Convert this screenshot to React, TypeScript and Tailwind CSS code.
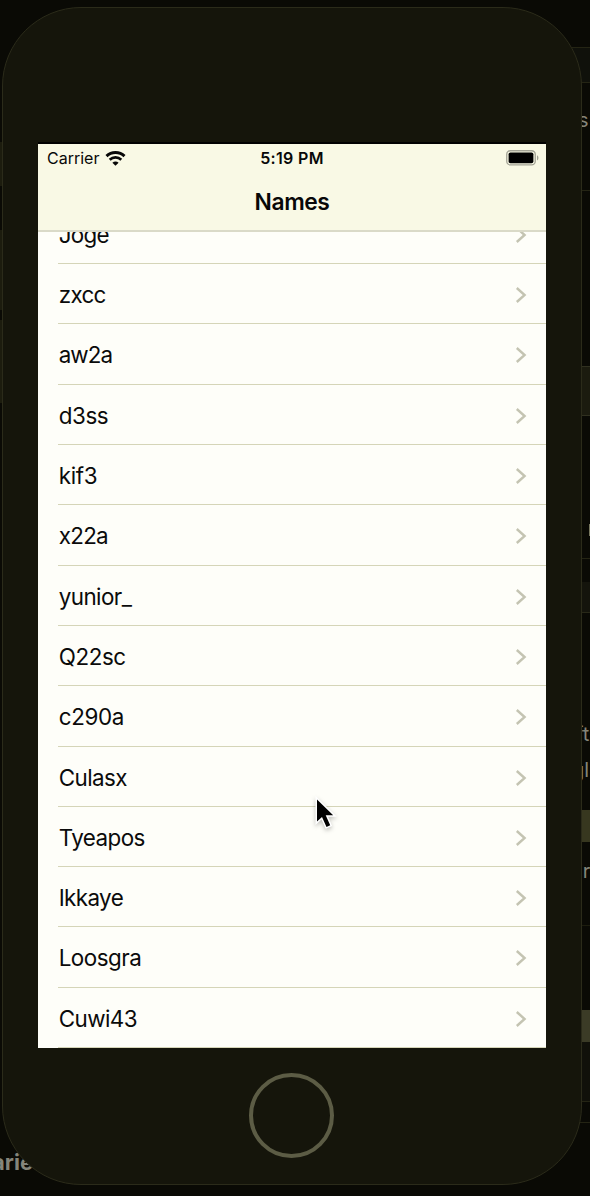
type Row = { label: string; tracking: string };

const rows: Row[] = [
  { label: 'Joge', tracking: 'tracking-[-0.7px]' },
  { label: 'zxcc', tracking: 'tracking-[-0.65px]' },
  { label: 'aw2a', tracking: 'tracking-[-0.9px]' },
  { label: 'd3ss', tracking: 'tracking-[-0.4px]' },
  { label: 'kif3', tracking: 'tracking-[-0.35px]' },
  { label: 'x22a', tracking: 'tracking-[-0.7px]' },
  { label: 'yunior_', tracking: 'tracking-[-0.55px]' },
  { label: 'Q22sc', tracking: 'tracking-[-0.4px]' },
  { label: 'c290a', tracking: 'tracking-[-0.35px]' },
  { label: 'Culasx', tracking: 'tracking-[-0.55px]' },
  { label: 'Tyeapos', tracking: 'tracking-[-0.55px]' },
  { label: 'Ikkaye', tracking: 'tracking-[-0.6px]' },
  { label: 'Loosgra', tracking: 'tracking-[-0.5px]' },
  { label: 'Cuwi43', tracking: 'tracking-[-0.55px]' },
];

function WifiIcon() {
  return (
    <svg className="ml-[6px] h-[15px] w-[21px]" viewBox="0 0 20 15" fill="none" stroke="#080808">
      <path d="M1 5.1C6 .3 14 .3 19 5.1" strokeWidth="3" />
      <path d="M4.2 8.7C7.6 5.6 12.4 5.6 15.8 8.7" strokeWidth="2.7" />
      <path d="M10 14.8 6.9 11.8C8.7 10.2 11.3 10.2 13.1 11.8Z" fill="#080808" stroke="none" />
    </svg>
  );
}

function BatteryIcon() {
  return (
    <svg className="h-[16px] w-[33px]" viewBox="0 0 33 16">
      <rect x="0.75" y="0.75" width="28.5" height="14.2" rx="3.6" fill="none" stroke="#a3a395" strokeWidth="1.3" />
      <rect x="2.6" y="2.5" width="24.8" height="10.7" rx="1.8" fill="#000" />
      <path d="M31 5.3c1.9.8 1.9 4.4 0 5.2z" fill="#a3a395" />
    </svg>
  );
}

function Chevron() {
  return (
    <svg className="mr-[19px] h-[16px] w-[12px]" viewBox="0 0 12 16" fill="none">
      <path d="M1.8 1 9.6 8 1.8 15" stroke="#c4c4b2" strokeWidth="2.4" />
    </svg>
  );
}

function LeftWindow() {
  return (
    <div className="flex w-[33px] flex-col justify-between pt-[142px] pb-[21px]">
      <div className="flex w-[4px] flex-col gap-[10px]">
        <div className="mb-[34px] h-[44px] bg-[#1c1c0e]" />
        <div className="h-[80px] bg-[#1c1c0e]" />
        <div className="h-[83px] bg-[#1c1c0e]" />
      </div>
      <div className="flex justify-end text-[22px] leading-[26px] font-bold">arie</div>
    </div>
  );
}

function RightWindow() {
  return (
    <div className="flex w-[18px] flex-col text-[20px] leading-[26px]">
      <div className="mt-[47px] h-[36px] border-y border-[#242414] bg-[#10110b]" />
      <div className="mt-[24px] h-[84px] border-b border-[#242414] pl-[6px]">s</div>
      <div className="mt-[175px] h-[50px] border-y border-[#303020] bg-[#1b1b0f]" />
      <div className="flex h-[143px] items-end justify-end border-b border-[#242414] pb-[22px]">
        <div className="h-[12px] w-px bg-[#77775f]" />
      </div>
      <div className="mt-[23px] h-[31px] border-b border-[#282818] bg-[#14140c]" />
      <div className="mt-[108px] flex h-[89px] flex-col gap-[10px] pl-[4px]">
        <span>ft</span>
        <span className="-ml-[4px]">gl</span>
      </div>
      <div className="h-[32px] bg-[#37371f]" />
      <div className="h-[84px] border-b border-[#1c1c0e] pt-[16px] pl-[6px]">ir</div>
      <div className="mt-[84px] h-[32px] bg-[#3b3b26]" />
      <div className="h-[60px] border-b border-[#242414] bg-[#11110a]" />
      <div className="h-[21px] border-b border-[#242414]" />
    </div>
  );
}

function Pointer() {
  return (
    <svg className="absolute top-[796px] left-[313px] h-[38px] w-[28px] drop-shadow-[0_2px_2px_rgba(0,0,0,0.25)]" viewBox="0 0 28 38">
      <path d="M4 3.5V25.5l5-4.6 4.5 10 3.7-1.6-4.5-10.1h7.5Z" fill="#000" stroke="#fff" strokeWidth="3" paintOrder="stroke" />
    </svg>
  );
}

export default function App() {
  return (
    <div className="relative grid h-[1196px] w-[590px] overflow-hidden bg-[#0a0a05] font-['Inter','Liberation_Sans',sans-serif]">
      <div className="col-start-1 row-start-1 flex h-[1196px] justify-between text-[#85857a]">
        <LeftWindow />
        <RightWindow />
      </div>
      <div className="relative col-start-1 row-start-1 mt-[7px] ml-[2px] flex h-[1178px] w-[580px] flex-col items-center rounded-[79px] border border-[#2b2b1a] bg-[#15150b]">
        <div className="mt-[134px] flex h-[906px] w-[508px] shrink-0 flex-col overflow-hidden border-t-2 border-[#020202] bg-[#fefef9]">
          <header className="flex h-[88px] shrink-0 flex-col border-b-2 border-[#dadac8] bg-[#f9f9e5] text-[#080808]">
            <div className="grid h-[28px] grid-cols-3 items-center">
              <div className="flex items-center pl-[9px] text-[16px] leading-[20px]">
                <span>Carrier</span>
                <WifiIcon />
              </div>
              <span className="text-center text-[16px] leading-[20px] font-semibold tracking-[0.35px]">5:19 PM</span>
              <div className="-mt-px flex justify-end pr-[7px]">
                <BatteryIcon />
              </div>
            </div>
            <h1 className="mt-[15.5px] text-center text-[22.8px] leading-[28px] font-semibold tracking-[-0.4px]">Names</h1>
          </header>
          <div className="flex min-h-0 flex-1 flex-col justify-end overflow-hidden">
            <ul className="flex flex-col">
              {rows.map((row) => (
                <li key={row.label} className="flex h-[60.3px] shrink-0 pl-[20px]">
                  <div className="flex flex-1 items-center justify-between border-b border-[#d5d5b8] pt-[2.8px]">
                    <span className={`pl-[0.7px] text-[22.4px] leading-[30px] text-[#0b0b0b] ${row.tracking}`}>{row.label}</span>
                    <Chevron />
                  </div>
                </li>
              ))}
            </ul>
          </div>
        </div>
        <div className="mt-[25px] mr-px size-[85px] rounded-full border-4 border-[#5c5c45]" />
      </div>
      <Pointer />
    </div>
  );
}
